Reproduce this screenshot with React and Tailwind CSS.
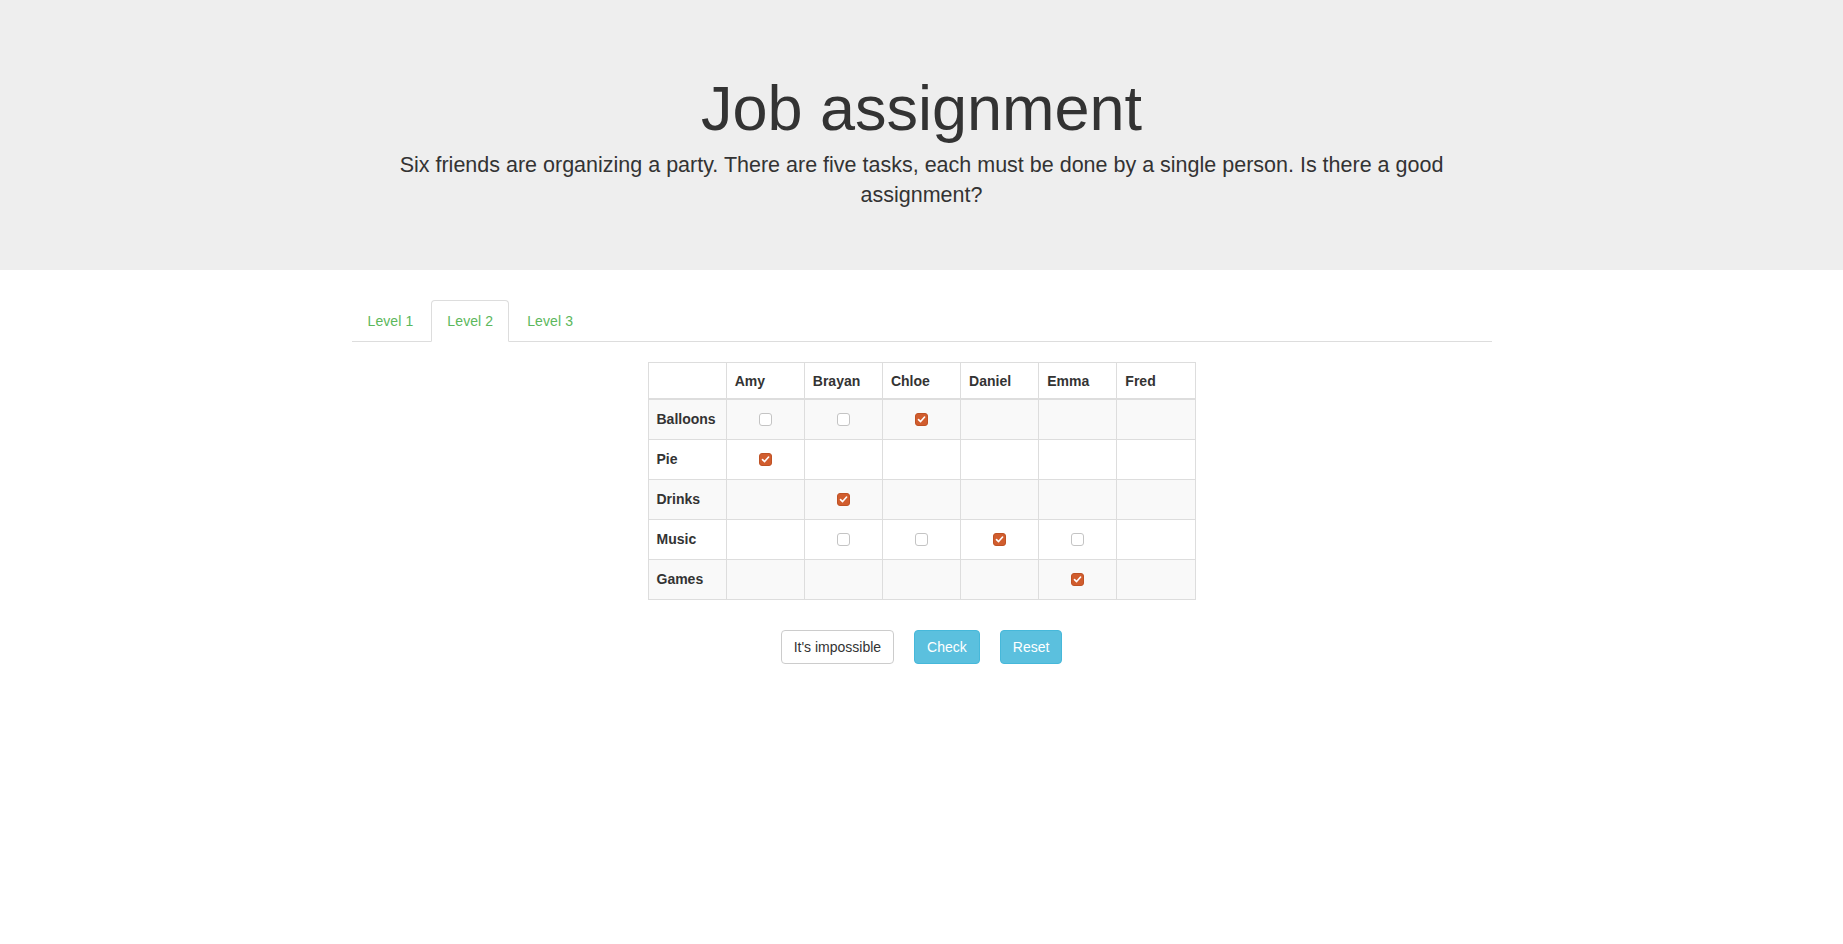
import { useState } from "react";

// 0 = no box, 1 = empty box, 2 = ticked box
const PEOPLE = ["Amy", "Brayan", "Chloe", "Daniel", "Emma", "Fred"];
const TASKS = [
  { name: "Balloons", cells: [1, 1, 2, 0, 0, 0] },
  { name: "Pie",      cells: [2, 0, 0, 0, 0, 0] },
  { name: "Drinks",   cells: [0, 2, 0, 0, 0, 0] },
  { name: "Music",    cells: [0, 1, 1, 2, 1, 0] },
  { name: "Games",    cells: [0, 0, 0, 0, 2, 0] },
];

function Box({ checked, onClick }) {
  if (checked) {
    return (
      <span
        onClick={onClick}
        className="inline-flex items-center justify-center w-[13px] h-[13px] rounded-[3px] bg-[#d15d2e] border border-[#bf5225] cursor-pointer"
      >
        <svg width="9" height="9" viewBox="0 0 9 9" fill="none">
          <path d="M1.5 4.6 L3.6 6.6 L7.6 2" stroke="#fff" strokeWidth="1.6" strokeLinecap="round" strokeLinejoin="round" />
        </svg>
      </span>
    );
  }
  return (
    <span
      onClick={onClick}
      className="inline-block w-[13px] h-[13px] rounded-[3px] bg-white border border-[#c4c4c4] cursor-pointer"
    />
  );
}

export default function App() {
  const [level, setLevel] = useState(2);
  const [grid, setGrid] = useState(TASKS.map((t) => t.cells));

  const toggle = (r, c) =>
    setGrid((g) => g.map((row, i) => (i !== r ? row : row.map((v, j) => (j === c ? (v === 2 ? 1 : 2) : v)))));

  return (
    <div className="min-h-screen bg-white text-[#333] text-[14px] font-['Liberation_Sans',Arial,sans-serif]">
      {/* Jumbotron */}
      <div className="bg-[#eeeeee] py-[48px] mb-[30px]">
        <div className="w-[1170px] mx-auto px-[15px] text-center">
          <h1 className="mt-[26px] mb-[7px] text-[63px] leading-[1.1] font-normal">Job assignment</h1>
          <p className="mb-[12px] text-[21.5px] leading-[30px]">
            Six friends are organizing a party. There are five tasks, each must be done by a single person. Is there a good assignment?
          </p>
        </div>
      </div>

      <div className="w-[1170px] mx-auto px-[15px]">
        {/* Tabs */}
        <ul className="flex border-b border-[#dddddd]">
          {[1, 2, 3].map((n) => (
            <li key={n} className="-mb-px">
              <button
                onClick={() => setLevel(n)}
                className={`mr-[2px] px-[15px] py-[10px] leading-[20px] tracking-[0.1px] rounded-t-[4px] border text-[#5cb85c] ${
                  level === n ? "bg-white border-[#dddddd] border-b-transparent" : "border-transparent"
                }`}
              >
                Level {n}
              </button>
            </li>
          ))}
        </ul>

        {/* Grid */}
        <table className="mt-[20px] mx-auto w-[548px] table-fixed border-collapse border border-[#dddddd]">
          <thead>
            <tr>
              <th className="border border-[#dddddd] border-b-2" />
              {PEOPLE.map((p) => (
                <th key={p} className="border border-[#dddddd] border-b-2 px-[8px] pt-[8px] pb-[7px] leading-[20px] text-left font-bold">
                  {p}
                </th>
              ))}
            </tr>
          </thead>
          <tbody>
            {TASKS.map((t, r) => (
              <tr key={t.name} className={r % 2 === 0 ? "bg-[#f9f9f9]" : "bg-white"}>
                <th className="border border-[#dddddd] px-[8px] py-[8px] text-left font-bold">
                  <div className="h-[23px] flex items-center">{t.name}</div>
                </th>
                {grid[r].map((v, c) => (
                  <td key={c} className="border border-[#dddddd] px-[8px] py-[8px]">
                    <div className="h-[23px] flex items-center justify-center">
                      {v > 0 && <Box checked={v === 2} onClick={() => toggle(r, c)} />}
                    </div>
                  </td>
                ))}
              </tr>
            ))}
          </tbody>
        </table>

        {/* Actions */}
        <div className="mt-[30px] flex justify-center gap-[20px]">
          <button className="px-[12px] py-[6px] leading-[20px] rounded-[4px] border border-[#cccccc] bg-white text-[#333]">
            It's impossible
          </button>
          <button className="px-[12px] py-[6px] leading-[20px] rounded-[4px] border border-[#46b8da] bg-[#5bc0de] text-white">
            Check
          </button>
          <button
            onClick={() => setGrid(TASKS.map((t) => t.cells))}
            className="px-[12px] py-[6px] leading-[20px] rounded-[4px] border border-[#46b8da] bg-[#5bc0de] text-white"
          >
            Reset
          </button>
        </div>
      </div>
    </div>
  );
}
